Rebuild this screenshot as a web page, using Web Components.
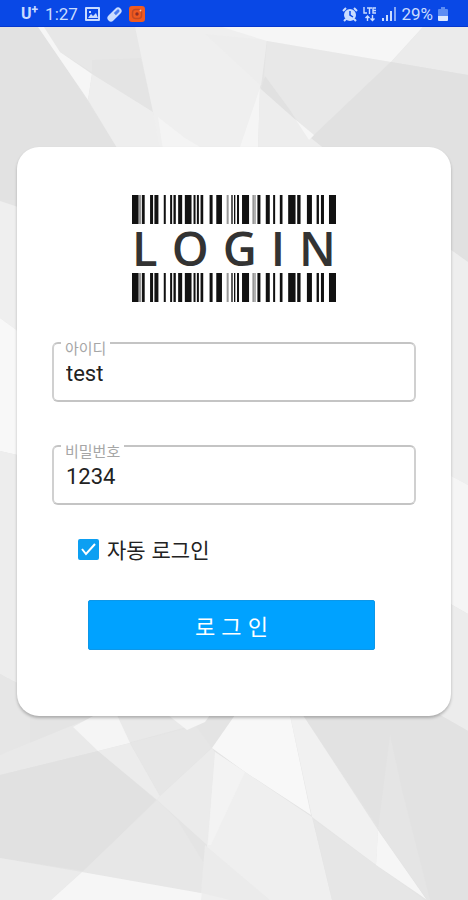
<!DOCTYPE html>
<html lang="ko">
<head>
<meta charset="utf-8">
<meta name="viewport" content="width=device-width, initial-scale=1">
<title>로그인</title>
<style>
  html, body { margin: 0; min-height: 100%; }
  body { font-family: Roboto, "Noto Sans CJK KR", sans-serif; background: #e4e4e4; color: #222; }
</style>
</head>
<body>
<login-page>
  <status-bar slot="status" time="1:27" battery="29%"></status-bar>
  <login-card>
    <barcode-logo slot="logo">LOGIN</barcode-logo>
    <outlined-field label="아이디" value="test"></outlined-field>
    <outlined-field label="비밀번호" value="1234"></outlined-field>
    <check-option slot="option" checked>자동 로그인</check-option>
    <action-button slot="action">로 그 인</action-button>
  </login-card>
</login-page>

<script>
class BaseElement extends HTMLElement {
  constructor() {
    super();
    this.attachShadow({ mode: 'open' });
  }
  connectedCallback() {
    this.shadowRoot.innerHTML = this.render();
  }
}

customElements.define('login-page', class extends BaseElement {
  render() {
    return `<style>
      :host { display: flex; flex-direction: column; min-height: 100vh; position: relative; isolation: isolate; }
      facet-backdrop { position: absolute; inset: 0; z-index: -1; }
      main { padding: 120px 17px 40px; }
    </style>
    <facet-backdrop></facet-backdrop>
    <slot name="status"></slot>
    <main><slot></slot></main>`;
  }
});

customElements.define('facet-backdrop', class extends BaseElement {
  render() {
    const facets = [
      ['#e2e2e2', '0,27 40,27 116,146 116,200 0,200'],
      ['#e7e7e7', '40,27 135,27 153,111 60,52'],
      ['#e4e4e4', '92,60 92,74 153,111 141,58'],
      ['#f6f6f6', '38,27 44,27 60,52 92,74 88,100'],
      ['#eeeeee', '88,100 92,74 153,112 165,148 117,148'],
      ['#efefef', '135,27 267,27 260,88 246,150 160,150 153,112'],
      ['#ededed', '205,34 267,40 261,86'],
      ['#f4f4f4', '158,117 185,138 205,150 163,150'],
      ['#f5f5f5', '260,88 258,150 239,150'],
      ['#ededed', '260,88 330,150 258,150'],
      ['#e8e8e8', '267,41 391,62 311,138 264,78'],
      ['#e1e1e1', '265,76 261,89 296,120 290,110'],
      ['#f6f6f6', '222,27 423,27 391,62 267,41'],
      ['#ebebeb', '423,27 468,27 468,75 391,62'],
      ['#e1e1e1', '391,62 468,75 468,262 440,242 440,150 326,150 311,138'],
      ['#f6f6f6', '296,120 314,135 309,140'],
      ['#efefef', '0,201 30,211 30,340 0,318'],
      ['#f8f8f8', '0,318 30,340 30,458 0,451'],
      ['#ededed', '0,451 30,458 30,690 0,674'],
      ['#e6e6e6', '0,674 30,690 30,744 0,755'],
      ['#eeeeee', '440,242 468,262 468,485 440,470'],
      ['#f5f5f5', '440,470 468,485 468,614 440,598'],
      ['#ececec', '440,598 468,614 468,731 440,715'],
      ['#e9e9e9', '0,755 98,715 170,715 205,722 98,751 0,775'],
      ['#f5f5f5', '73,727 95,715 117,715 130,743 98,751'],
      ['#e1e1e1', '0,775 98,751 156,800 84,871 0,858'],
      ['#ececec', '98,751 130,743 160,796 157,800'],
      ['#e6e6e6', '130,743 196,726 212,748 160,796'],
      ['#f5f5f5', '168,715 210,715 205,722 187,730'],
      ['#ebebeb', '212,748 215,752 207,845 157,800 160,796'],
      ['#e7e7e7', '157,800 178,821 205,865 201,893 82,872'],
      ['#ebebeb', '0,858 82,872 51,900 0,900'],
      ['#f6f6f6', '82,872 201,893 250,900 51,900'],
      ['#f8f8f8', '212,748 235,715 290,715 311,815 245,772'],
      ['#f1f1f1', '290,715 303,715 378,830 376,865 312,817'],
      ['#efefef', '215,752 245,772 312,817 332,900 201,900 207,845'],
      ['#f3f3f3', '215,752 245,772 211,845 208,845'],
      ['#ebebeb', '205,845 270,900 230,900 201,893'],
      ['#e6e6e6', '313,819 376,865 425,900 332,900'],
      ['#f6f6f6', '378,830 427,900 420,895 376,865'],
      ['#e2e2e2', '303,715 440,715 468,731 468,900 427,900'],
      ['#e5e5e5', '390,735 402,790 430,900 427,900 378,830']
    ];
    return `<style>
      :host { display: block; overflow: hidden; background: #e4e4e4; }
      svg { display: block; width: 100%; height: 100%; }
    </style>
    <svg viewBox="0 0 468 900" preserveAspectRatio="none" aria-hidden="true">
      ${facets.map(([c, p]) => `<polygon fill="${c}" points="${p}"/>`).join('')}
    </svg>`;
  }
});

customElements.define('status-bar', class extends BaseElement {
  render() {
    return `<style>
      :host { display: flex; justify-content: space-between; align-items: center; height: 27px;
        box-sizing: border-box; padding: 2px 20px 0 21px; background: #0948e6; color: #c9dcff;
        border-bottom: 1px solid #0638cf; font-size: 17px; line-height: 20px; }
      div { display: flex; align-items: center; gap: 7px; }
      .carrier { display: flex; font-size: 16px; font-weight: 700; }
      .carrier sup { font-size: 12px; line-height: 12px; }
      svg { display: block; }
      .right { gap: 5px; }
    </style>
    <div>
      <span class="carrier">U<sup>+</sup></span>
      <span>${this.getAttribute('time')}</span>
      <svg width="15" height="14" viewBox="0 0 15 14"><path fill="#c9dcff" fill-rule="evenodd" d="M1 0h13q1 0 1 1v12q0 1-1 1H1q-1 0-1-1V1q0-1 1-1zM2 2v10h11V2zM3 11l3-4 2 2 3-3 2 5zM4 4h2v2H4z"/></svg>
      <svg width="15" height="15" viewBox="0 0 15 15"><g transform="rotate(-45 7.5 7.5)"><rect x="-1" y="4" width="17" height="7" rx="3.5" fill="#c9dcff"/><path d="M8 6h4.500a1.500 1.500 0 0 1 0 3H8z" fill="#4a7cf0"/></g></svg>
      <svg width="16" height="16" viewBox="0 0 16 16"><rect width="16" height="16" rx="3" fill="#f05a20"/><rect x="3.500" y="3.500" width="9" height="9" rx="3" fill="none" stroke="#c24a22" stroke-width="1.500"/><circle cx="8" cy="8" r="1.700" fill="#8d2d25"/><circle cx="11.500" cy="4.500" r="1" fill="#ffc3a2"/></svg>
    </div>
    <div class="right">
      <svg width="16" height="15" viewBox="0 0 16 15"><circle cx="8" cy="8" r="6" fill="#c9dcff"/><path d="M1 4l3-3M15 4l-3-3M4 12l-2 2M12 12l2 2" stroke="#c9dcff" stroke-width="2"/><path d="M8 4v4l3 2" fill="none" stroke="#0948e6" stroke-width="1.500"/></svg>
      <svg width="14" height="15" viewBox="0 0 14 15" fill="none" stroke="#c9dcff" stroke-width="1.400"><path d="M1 0v6h3M4 1h5M6.500 1v6M13 1h-3v5h3M10 3.500h3M4.500 14V9M2.500 11l2-2 2 2M9.500 8v5M7.500 11.500l2 2 2-2"/></svg>
      <svg width="14" height="14" viewBox="0 0 14 14" fill="#c9dcff"><path d="M0 11h2v3H0zM4 8h2v6H4zM8 4h2v10H8z"/><path d="M12 0h2v14h-2z" opacity=".65"/></svg>
      <span>${this.getAttribute('battery')}</span>
      <svg width="10" height="14" viewBox="0 0 10 14"><path d="M3 0h4v2h2q1 0 1 1v6H0V3q0-1 1-1h2z" fill="#5d8df3"/><path d="M0 9h10v4q0 1-1 1H1q-1 0-1-1z" fill="#dce8ff"/></svg>
    </div>`;
  }
});

customElements.define('login-card', class extends BaseElement {
  render() {
    return `<style>
      :host { display: block; background: #fff; border-radius: 22px; box-shadow: 0 2px 3px rgba(0,0,0,.25); }
      form { display: flex; flex-direction: column; padding: 48px 35px 66px; }
      .fields { display: flex; flex-direction: column; gap: 43px; margin-top: 40px; }
      .option { padding: 29px 26px 0; }
      .action { padding: 36px 41px 0 36px; }
    </style>
    <form>
      <slot name="logo"></slot>
      <div class="fields"><slot></slot></div>
      <div class="option"><slot name="option"></slot></div>
      <div class="action"><slot name="action"></slot></div>
    </form>`;
  }
});

customElements.define('barcode-logo', class extends BaseElement {
  render() {
    const bars = [[0,20],[20,8,1],[30,8],[54,9],[67,12],[95,6],[114,6],[124,7],[138,12],[158,20],[184,6],[194,6],[205,8],[232,9],[252,17],[283,6,1],[297,4],[305,4],[314,6],[329,21],[360,6,1],[366,4,1],[375,9],[400,12],[422,6],[442,8],[467,22],[494,10],[523,15],[552,7],[565,9],[589,21]];
    const code = `<svg viewBox="0 0 610 87" preserveAspectRatio="none" aria-hidden="true">${bars.map(([x, w, g]) => `<rect x="${x}" width="${w}" height="87" fill="${g ? '#999' : '#111'}"/>`).join('')}</svg>`;
    return `<style>
      :host { display: flex; flex-direction: column; align-items: center; color: #333; }
      svg { display: block; width: 204px; height: 29px; }
      .word { font: 600 47px/49px "Open Sans", sans-serif; letter-spacing: 14px; padding-left: 14px; white-space: nowrap; }
    </style>
    ${code}<div class="word"><slot></slot></div>${code}`;
  }
});

customElements.define('outlined-field', class extends BaseElement {
  render() {
    return `<style>
      :host { display: block; position: relative; }
      label { position: absolute; top: -1px; left: 9px; padding: 0 4px; background: #fff; color: #a6a6a6; font-size: 15px; line-height: 16px; }
      input { display: block; box-sizing: border-box; width: 100%; height: 60px; border: 2px solid #c4c4c4;
        border-left-color: #d0d0d0; border-right-color: #d0d0d0; border-radius: 6px; background: #fff; color: #222;
        font: 22px/26px Roboto, "Noto Sans CJK KR", sans-serif; padding: 5px 12px 3px; outline: none; }
    </style>
    <input id="control" type="text" value="${this.getAttribute('value')}">
    <label for="control">${this.getAttribute('label')}</label>`;
  }
});

customElements.define('check-option', class extends BaseElement {
  render() {
    return `<style>
      :host { display: block; font-family: "Noto Sans CJK KR", sans-serif; }
      label { display: flex; align-items: center; gap: 8px; font-size: 21px; line-height: 30px; color: #222; }
      .box { display: grid; width: 21px; height: 21px; }
      .box > * { grid-area: 1 / 1; }
      input { appearance: none; margin: 0; width: 21px; height: 21px; border: 2px solid #888; border-radius: 2px; }
      input:checked { background: #0c9ff2; border-color: #0c9ff2; }
      svg { width: 21px; height: 21px; pointer-events: none; }
      input:not(:checked) + svg { visibility: hidden; }
    </style>
    <label for="tick"><span class="box"><input id="tick" type="checkbox" ${this.hasAttribute('checked') ? 'checked' : ''}><svg viewBox="0 0 21 21" aria-hidden="true"><path d="M4 10l4 5 9-10" fill="none" stroke="#fff" stroke-width="2"/></svg></span><span><slot></slot></span></label>`;
  }
});

customElements.define('action-button', class extends BaseElement {
  render() {
    return `<style>
      :host { display: block; }
      button { display: block; width: 100%; height: 50px; border: 1px solid #0d97e8; border-radius: 2px; padding: 0;
        background: #00a2ff; color: #fff; font: 22px/30px "Noto Sans CJK KR", sans-serif; }
    </style>
    <button type="button"><slot></slot></button>`;
  }
});
</script>
</body>
</html>
